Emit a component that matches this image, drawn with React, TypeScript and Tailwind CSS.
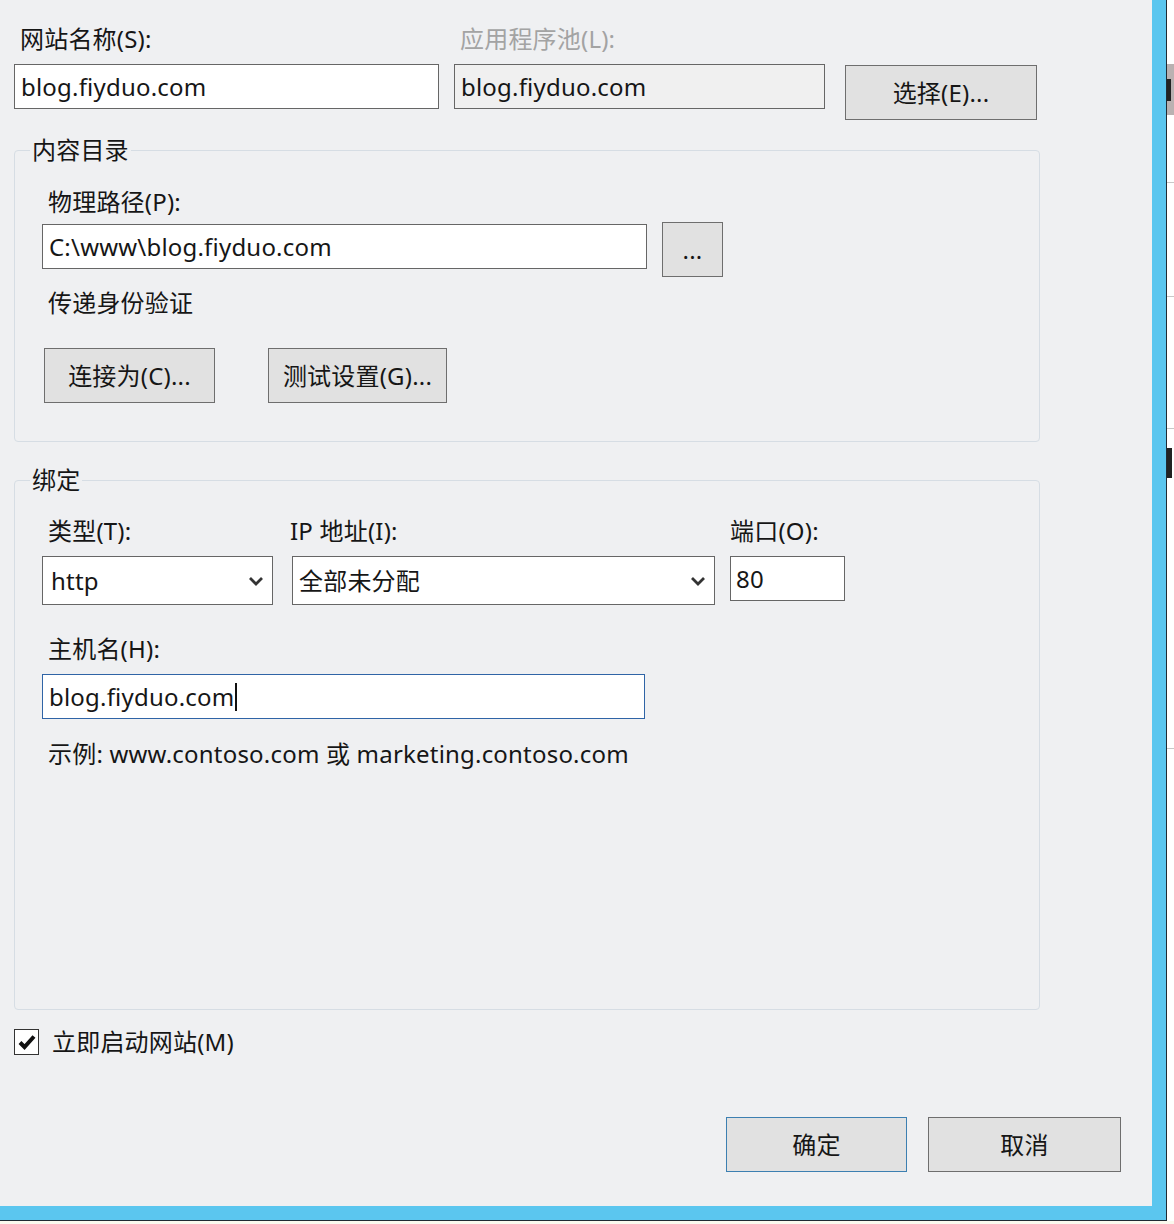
import React from 'react'

const Btn = (props: { w: string; children: React.ReactNode; blue?: boolean; extra?: string }) => (
    <div
        className={`${props.w} h-[55px] flex items-center justify-center bg-[#e1e1e1] border ${props.blue ? 'border-[#3c7fb1]' : 'border-[#6e6e6e]'} ${props.extra ?? ''}`}
    >
        {props.children}
    </div>
)

const Chevron = () => (
    <svg width="16" height="12" viewBox="0 0 16 12" className="mr-[8px]">
        <polyline points="2,3 8,9 14,3" fill="none" stroke="#333" strokeWidth="2.8" />
    </svg>
)

export default function App() {
    return (
        <div className="w-[1174px] h-[1224px] bg-[#fbf9ee] overflow-hidden font-['Noto_Sans','Noto_Sans_CJK_SC',sans-serif] text-[24px] text-[#161616] tracking-[0.2px]">
            <div className="flex h-[1221px]">
                <div className="w-[1167px] h-full border-r border-b border-[#1f2a33]">
                    <div className="w-full h-full border-r-[14px] border-b-[14px] border-[#5bc6ef] bg-[#eff0f2] flex flex-col">

                        {/* site name / app pool */}
                        <div className="flex items-start pl-[14px] pt-[21px]">
                            <div className="w-[425px]">
                                <div className="h-[36px] leading-[36px] pl-[6px]">网站名称(S):</div>
                                <div className="mt-[7px] h-[45px] flex items-center pl-[6px] bg-white border border-[#666]">
                                    blog.fiyduo.com
                                </div>
                            </div>
                            <div className="ml-[15px] w-[371px]">
                                <div className="h-[36px] leading-[36px] pl-[6px] text-[#a3a3a3]">应用程序池(L):</div>
                                <div className="mt-[7px] h-[45px] flex items-center pl-[6px] bg-[#f0f0f0] border border-[#666]">
                                    blog.fiyduo.com
                                </div>
                            </div>
                            <Btn w="w-[192px]" extra="ml-[20px] mt-[44px] h-[54px]">选择(E)...</Btn>
                        </div>

                        {/* 内容目录 */}
                        <fieldset className="ml-[14px] mt-[12px] w-[1026px] border border-[#d6dde4] rounded-[4px]">
                            <legend className="ml-[15px] px-[2px] h-[36px] leading-[36px]">内容目录</legend>
                            <div className="pl-[27px] pb-[38px]">
                                <div className="mt-[16px] h-[36px] leading-[36px] pl-[6px]">物理路径(P):</div>
                                <div className="mt-[2px] flex items-start">
                                    <div className="mt-[2px] w-[605px] h-[45px] flex items-center pl-[6px] bg-white border border-[#666]">
                                        C:\www\blog.fiyduo.com
                                    </div>
                                    <Btn w="w-[61px]" extra="ml-[15px]">...</Btn>
                                </div>
                                <div className="mt-[8px] h-[36px] leading-[36px] pl-[6px]">传递身份验证</div>
                                <div className="mt-[27px] flex ml-[2px]">
                                    <Btn w="w-[171px]">连接为(C)...</Btn>
                                    <Btn w="w-[179px]" extra="ml-[53px]">测试设置(G)...</Btn>
                                </div>
                            </div>
                        </fieldset>

                        {/* 绑定 */}
                        <fieldset className="ml-[14px] mt-[20px] w-[1026px] border border-[#d6dde4] rounded-[4px]">
                            <legend className="ml-[15px] px-[2px] h-[36px] leading-[36px]">绑定</legend>
                            <div className="pl-[27px] pb-[237px]">
                                <div className="mt-[15px] flex items-start">
                                    <div className="w-[231px]">
                                        <div className="h-[36px] leading-[36px] pl-[6px]">类型(T):</div>
                                        <div className="mt-[7px] h-[49px] flex items-center justify-between pl-[8px] bg-white border border-[#666]">
                                            http
                                            <Chevron />
                                        </div>
                                    </div>
                                    <div className="ml-[19px] w-[423px]">
                                        <div className="h-[36px] leading-[36px] -ml-[2px]">IP 地址(I):</div>
                                        <div className="mt-[7px] h-[49px] flex items-center justify-between pl-[6px] bg-white border border-[#666]">
                                            全部未分配
                                            <Chevron />
                                        </div>
                                    </div>
                                    <div className="ml-[15px] w-[115px]">
                                        <div className="h-[36px] leading-[36px]">端口(O):</div>
                                        <div className="mt-[7px] h-[45px] flex items-center pl-[5px] bg-white border border-[#666]">
                                            80
                                        </div>
                                    </div>
                                </div>
                                <div className="mt-[26px] h-[36px] leading-[36px] pl-[6px]">主机名(H):</div>
                                <div className="mt-[7px] w-[603px] h-[45px] flex items-center pl-[6px] bg-white border border-[#2f64a6]">
                                    blog.fiyduo.com
                                    <span className="ml-[1px] w-[2px] h-[28px] bg-[#111]" />
                                </div>
                                <div className="mt-[17px] h-[36px] leading-[36px] pl-[6px]">
                                    示例: www.contoso.com 或 marketing.contoso.com
                                </div>
                            </div>
                        </fieldset>

                        {/* start immediately */}
                        <div className="mt-[14px] ml-[14px] h-[36px] flex items-center">
                            <div className="w-[25px] h-[26px] bg-white border border-[#333] flex items-center justify-center">
                                <svg width="18" height="16" viewBox="0 0 18 16">
                                    <path d="M2 8.5 L6.5 13 L16 2.5" fill="none" stroke="#111" strokeWidth="4" />
                                </svg>
                            </div>
                            <span className="ml-[13px] leading-[36px]">立即启动网站(M)</span>
                        </div>

                        {/* ok / cancel */}
                        <div className="mt-[57px] flex justify-end pr-[31px]">
                            <Btn w="w-[181px]" blue>确定</Btn>
                            <Btn w="w-[193px]" extra="ml-[21px]">取消</Btn>
                        </div>
                    </div>
                </div>

                {/* window behind */}
                <div className="flex-1 bg-white flex flex-col">
                    <div className="mt-[64px] h-[51px] bg-[#b9b1b1] flex items-center">
                        <div className="w-[4px] h-[22px] bg-[#222]" />
                    </div>
                    <div className="mt-[67px] h-px bg-[#c8c8c8]" />
                    <div className="mt-[113px] h-px bg-[#c8c8c8]" />
                    <div className="mt-[131px] h-px bg-[#c8c8c8]" />
                    <div className="mt-[19px] w-[5px] h-[30px] bg-[#222]" />
                    <div className="mt-[270px] h-px bg-[#c8c8c8]" />
                </div>
            </div>
        </div>
    )
}
